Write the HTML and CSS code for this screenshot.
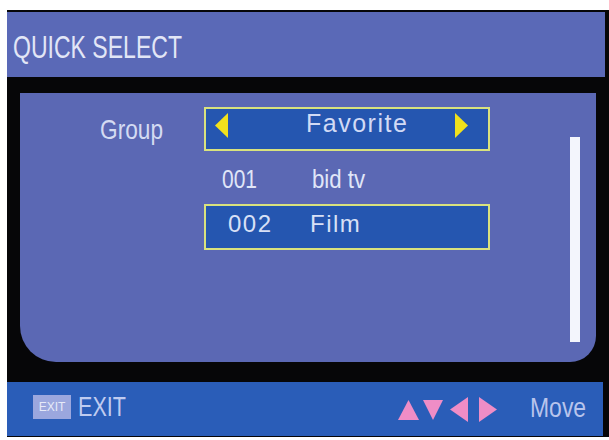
FILE: index.html
```html
<!DOCTYPE html>
<html>
<head>
<meta charset="utf-8">
<link rel="stylesheet" href="styles.css">
</head>
<body>
<div class="tv">
  <div class="title"><span class="title-text">QUICK SELECT</span></div>
  <div class="panel">
    <div class="list">
      <div class="group-row">
        <div class="label"><span class="label-text">Group</span></div>
        <div class="box select">
          <svg class="yarrow yl" width="13" height="25" viewBox="0 0 13 25"><path d="M0 12.5 L13 0 V25 Z"/></svg>
          <span class="val">Favorite</span>
          <svg class="yarrow yr" width="13" height="25" viewBox="0 0 13 25"><path d="M0 0 L13 12.5 L0 25 Z"/></svg>
        </div>
      </div>
      <div class="ch-row">
        <span class="ch-num"><span class="n1">001</span></span><span class="ch-name"><span class="n2">bid tv</span></span>
      </div>
      <div class="box ch-sel">
        <span class="sel-num">002</span><span class="sel-name">Film</span>
      </div>
    </div>
    <div class="scrollbar"></div>
  </div>
  <div class="footer">
    <span class="badge">EXIT</span>
    <span class="exit"><span class="exit-text">EXIT</span></span>
    <div class="keys">
      <svg class="k-up" width="21" height="20" viewBox="0 0 21 20"><path d="M10.5 0 L21 20 L0 20 Z"/></svg>
      <svg class="k-down" width="20" height="20" viewBox="0 0 20 20"><path d="M0 0 H20 L10 20 Z"/></svg>
      <svg class="k-left" width="18" height="25" viewBox="0 0 18 25"><path d="M0 12.5 L18 0 V25 Z"/></svg>
      <svg class="k-right" width="18" height="25" viewBox="0 0 18 25"><path d="M0 0 L18 12.5 L0 25 Z"/></svg>
    </div>
    <span class="move"><span class="move-text">Move</span></span>
  </div>
</div>
</body>
</html>
```
FILE: styles.css
```css
html, body {
  margin: 0;
  padding: 0;
  background: #ffffff;
}
body {
  font-family: "Liberation Sans", Arial, sans-serif;
}
.tv {
  margin: 10px 0 0 7px;
  width: 602px;
  height: 427px;
  background: #060608;
  display: flex;
  flex-direction: column;
}
.title {
  margin: 2px 4px 0 0;
  height: 65px;
  box-sizing: border-box;
  padding: 19px 0 0 6px;
  background: #5a69b7;
  white-space: nowrap;
}
.title-text {
  display: inline-block;
  font-size: 32px;
  line-height: 32px;
  color: #e2e6f6;
  transform: scaleX(0.72);
  transform-origin: left top;
}
.panel {
  margin: 16px 13px 0 13px;
  height: 269px;
  background: #5b68b4;
  border-radius: 0 0 26px 36px;
  display: flex;
}
.list {
  margin-left: 80px;
  display: flex;
  flex-direction: column;
}
.group-row {
  margin-top: 14px;
  height: 44px;
  display: flex;
  align-items: flex-start;
}
.label {
  width: 104px;
  height: 44px;
  white-space: nowrap;
}
.label-text {
  display: inline-block;
  font-size: 28px;
  line-height: 46px;
  color: #d4dbf2;
  transform: scaleX(0.81);
  transform-origin: left top;
}
.box {
  box-sizing: border-box;
  width: 286px;
  border: 2px solid #d9e27e;
  background: #2556b0;
}
.select {
  height: 44px;
  display: flex;
  align-items: flex-start;
}
.yarrow {
  display: block;
  margin-top: 4px;
  fill: #f1e11c;
}
.yl {
  margin-left: 9px;
}
.yr {
  margin-left: auto;
  margin-right: 20px;
}
.val {
  margin-left: 78px;
  margin-top: -1px;
  font-size: 25px;
  line-height: 30px;
  letter-spacing: 1.5px;
  color: #d2daf5;
}
.ch-row {
  margin-left: -80px;
  padding-left: 202px;
  box-sizing: border-box;
  height: 53px;
  padding-top: 4px;
  display: flex;
  white-space: nowrap;
  font-size: 25px;
  line-height: 49px;
  color: #e0e6f8;
}
.ch-num {
  width: 90px;
}
.n1 {
  display: inline-block;
  transform: scaleX(0.84);
  transform-origin: left top;
}
.n2 {
  display: inline-block;
  transform: scaleX(0.89);
  transform-origin: left top;
}
.ch-sel {
  margin-left: 104px;
  height: 46px;
  padding-left: 22px;
  display: flex;
  align-items: flex-start;
  font-size: 24px;
  line-height: 36px;
  letter-spacing: 1.5px;
  color: #d8e0f6;
  white-space: nowrap;
}
.sel-num {
  width: 82px;
}
.scrollbar {
  margin: 44px 16px 0 auto;
  width: 10px;
  height: 205px;
  background: #f3f5fc;
}
.footer {
  margin: 20px 6px 0 0;
  height: 54px;
  background: #2a5db8;
  display: flex;
  align-items: flex-start;
  padding-left: 26px;
  white-space: nowrap;
}
.badge {
  margin-top: 13px;
  width: 38px;
  height: 24px;
  background: #9ba7de;
  color: #e6eaf8;
  font-size: 12px;
  line-height: 24px;
  text-align: center;
}
.exit {
  margin: 11px 0 0 7px;
  width: 48px;
}
.exit-text {
  display: inline-block;
  font-size: 28px;
  line-height: 28px;
  color: #bfcbf0;
  transform: scaleX(0.77);
  transform-origin: left top;
}
.keys {
  margin-left: 272px;
  display: flex;
  align-items: flex-start;
  fill: #ef8dc6;
}
.keys svg {
  display: block;
}
.k-up {
  margin-top: 18px;
}
.k-down {
  margin: 18px 0 0 4px;
}
.k-left {
  margin: 15px 0 0 7px;
}
.k-right {
  margin: 15px 0 0 11px;
}
.move {
  margin: 12px 0 0 33px;
  width: 56px;
}
.move-text {
  display: inline-block;
  font-size: 27px;
  line-height: 28px;
  color: #b8c4ec;
  transform: scaleX(0.85);
  transform-origin: left top;
}
```
